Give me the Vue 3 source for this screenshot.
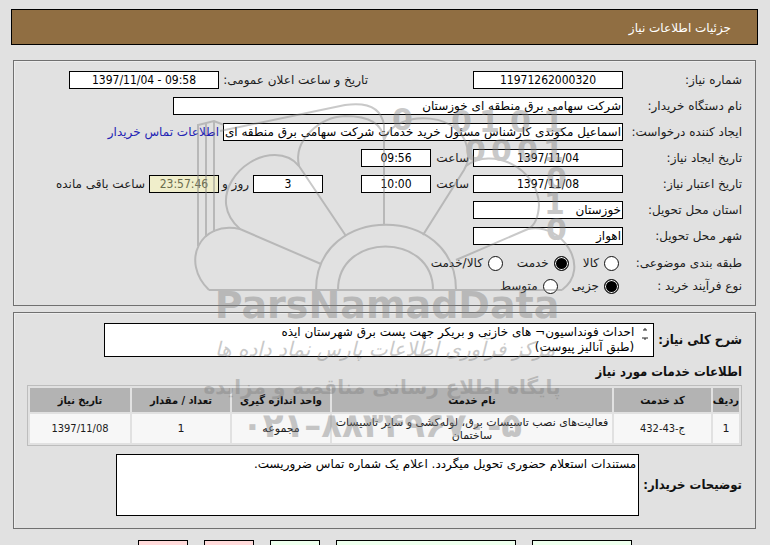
<script setup>
const summary = 'احداث فونداسیون¬ های خازنی و بریکر جهت پست برق شهرستان ایذه\n(طبق آنالیز پیوست)'
const notes = 'مستندات استعلام حضوری تحویل میگردد. اعلام یک شماره تماس ضروریست.'
const services = [
  {
    row: '1',
    code: 'ج-43-432',
    name: 'فعالیت‌های نصب تاسیسات برق، لوله‌کشی و سایر تاسیسات ساختمان',
    unit: 'مجموعه',
    amount: '1',
    date: '1397/11/08',
  },
]
const kinds = [
  { id: 'goods', label: 'کالا' },
  { id: 'service', label: 'خدمت' },
  { id: 'both', label: 'کالا/خدمت' },
]
const processes = [
  { id: 'small', label: 'جزیی' },
  { id: 'medium', label: 'متوسط' },
]
</script>

<template>
  <main class="page" dir="rtl">
    <header class="title">جزئیات اطلاعات نیاز</header>

    <section class="panel details">
      <div class="line">
        <label class="name" for="number">شماره نیاز:</label>
        <input id="number" class="box date" readonly value="11971262000320">
        <label class="announce" for="announced">تاریخ و ساعت اعلان عمومی:</label>
        <input id="announced" class="box date" dir="ltr" readonly value="1397/11/04 - 09:58">
      </div>
      <div class="line">
        <label class="name" for="buyer">نام دستگاه خریدار:</label>
        <input id="buyer" class="box buyer" readonly value="شرکت سهامی برق منطقه ای خوزستان">
      </div>
      <div class="line">
        <label class="name" for="creator">ایجاد کننده درخواست:</label>
        <input id="creator" class="box creator" readonly value="اسماعیل مکوندی کارشناس مسئول خرید خدمات شرکت سهامی برق منطقه ای خوزستان">
        <a class="contact" href="#">اطلاعات تماس خریدار</a>
      </div>
      <div class="line">
        <label class="name" for="created">تاریخ ایجاد نیاز:</label>
        <input id="created" class="box date" readonly value="1397/11/04">
        <label class="hour" for="createdHour">ساعت</label>
        <input id="createdHour" class="box time" readonly value="09:56">
      </div>
      <div class="line">
        <label class="name" for="expires">تاریخ اعتبار نیاز:</label>
        <input id="expires" class="box date" readonly value="1397/11/08">
        <label class="hour" for="expiresHour">ساعت</label>
        <input id="expiresHour" class="box time" readonly value="10:00">
        <input id="days" class="box time days" readonly value="3">
        <label class="unit" for="days">روز و</label>
        <input id="remaining" class="box time remaining" readonly value="23:57:46">
        <label class="left" for="remaining">ساعت باقی مانده</label>
      </div>
      <div class="line">
        <label class="name" for="province">استان محل تحویل:</label>
        <input id="province" class="box place" readonly value="خوزستان">
      </div>
      <div class="line">
        <label class="name" for="city">شهر محل تحویل:</label>
        <input id="city" class="box place" readonly value="اهواز">
      </div>
      <div class="line choice" role="radiogroup" aria-label="طبقه بندی موضوعی">
        <span class="name">طبقه بندی موضوعی:</span>
        <label v-for="k in kinds" :key="k.id" class="option">
          <input type="radio" name="kind" :checked="k.id === 'service'">{{ k.label }}
        </label>
      </div>
      <div class="line choice" role="radiogroup" aria-label="نوع فرآیند خرید">
        <span class="name">نوع فرآیند خرید :</span>
        <label v-for="p in processes" :key="p.id" class="option">
          <input type="radio" name="process" :checked="p.id === 'small'">{{ p.label }}
        </label>
      </div>
    </section>

    <section class="panel items">
      <div class="summary">
        <label class="strong" for="summary">شرح کلی نیاز:</label>
        <div class="summarybox">
          <svg class="spin" viewBox="0 0 12 20" aria-hidden="true">
            <path d="M4 6h4M5 5h2M3 14h6M5 15h2" />
          </svg>
          <textarea id="summary" readonly :value="summary"></textarea>
        </div>
      </div>
      <h2 class="strong">اطلاعات خدمات مورد نیاز</h2>
      <table>
        <colgroup>
          <col class="c1"><col class="c2"><col><col class="c3"><col class="c3"><col class="c4">
        </colgroup>
        <thead>
          <tr>
            <th>ردیف</th><th>کد خدمت</th><th>نام خدمت</th><th>واحد اندازه گیری</th><th>تعداد / مقدار</th><th>تاریخ نیاز</th>
          </tr>
        </thead>
        <tbody>
          <tr v-for="s in services" :key="s.row">
            <td>{{ s.row }}</td><td class="num">{{ s.code }}</td><td>{{ s.name }}</td><td>{{ s.unit }}</td><td>{{ s.amount }}</td><td class="num">{{ s.date }}</td>
          </tr>
        </tbody>
      </table>
      <div class="notes">
        <label class="strong" for="notes">توضیحات خریدار:</label>
        <textarea id="notes" class="notesbox" readonly :value="notes"></textarea>
      </div>
    </section>

    <footer class="actions">
      <button class="green medium" type="button" aria-label="پاسخ به نیاز"></button>
      <button class="green wide" type="button" aria-label="مشاهده مدارک پیوستی"></button>
      <button class="green" type="button" aria-label="چاپ"></button>
      <button class="pink" type="button">بازگشت</button>
      <button class="pink" type="button" aria-label="خروج"></button>
    </footer>

    <svg class="mark" viewBox="185 95 400 360" aria-hidden="true">
      <g class="lines">
        <path d="M209 290H562" />
        <path d="M316 290C316 203 456 203 456 290" />
        <path d="M338 290C338 232 433 232 433 290" />
        <path d="M209 290C180 262 200 220 240 229L321 264" />
        <path d="M240 229C206 200 240 155 275 155Q290 155 299 166L346 236" />
        <path d="M299 166C293 140 320 117 345 116Q382 116 384 140V225" />
        <path d="M384 140C395 108 468 110 468 155Q469 161 464 170L423 235" />
        <path d="M466 166C492 146 538 168 539 205Q538 224 528 229L456 260" />
        <path d="M528 229C562 222 592 268 562 290" />
        <path d="M198 246V125L214 121L224 125M206 237V123M214 232V121" />
        <path d="M220 131L345 105Q380 100 384 125V140" />
      </g>
      <g class="digits">
        <text x="392" y="130">0</text><text x="451" y="132">0</text>
        <text x="479" y="132">1</text><text x="510" y="132">0</text><text x="543" y="132">1</text>
        <text x="465" y="161">0</text><text x="491" y="161">0</text><text x="517" y="161">0</text><text x="543" y="161">1</text>
        <text x="546" y="189">0</text><text x="544" y="214">1</text><text x="546" y="240">0</text>
      </g>
      <text class="brand" x="387" y="318">ParsNamadData</text>
      <text class="script" x="385" y="356">مرکز فرآوری اطلاعات پارس نماد داده ها</text>
      <text class="tag" x="382" y="394">پایگاه اطلاع رسانی مناقصه و مزایده</text>
      <text class="phone" x="382" y="437">۰۲۱–۸۸۳۴۹۶۷۰-۵</text>
    </svg>
  </main>
</template>

<style>
body {
  background: #e1e1e1;
  overflow: hidden;
  height: 100vh;
}
</style>

<style scoped>
.page {
  position: relative;
  padding: 9px 12px 0 11px;
  font-family: "DejaVu Sans", sans-serif;
  font-size: 12px;
  line-height: 16px;
  color: #1c1c1c;
}
.page * { box-sizing: border-box; }
input, textarea, button { font: inherit; color: #000; }
.title {
  height: 36px;
  padding: 10px 26px;
  border: 1px solid #000;
  background: #906e42;
  color: #fff;
}
.panel {
  margin: 15px 2px 0;
  border: 1px solid #707070;
  box-shadow: inset 1px 1px #ededed;
}
.details { padding: 10px 13px 4px; }
.items { margin-top: 6px; padding: 10px 13px 12px; }
.line {
  display: flex;
  align-items: center;
  height: 18px;
  margin-bottom: 8px;
  white-space: nowrap;
}
.name { width: 119px; flex: none; }
.box {
  height: 18px;
  border: 1px solid #000;
  border-radius: 0;
  background: #fff;
  padding: 0 1px;
  margin: 0;
  outline: none;
}
.date { width: 150px; text-align: center; font-family: "DejaVu Sans Condensed", sans-serif; }
.place { width: 150px; }
.time { width: 70px; text-align: center; font-family: "DejaVu Sans Condensed", sans-serif; }
.buyer { width: 450px; }
.creator { width: 400px; }
.announce { width: 149px; margin-right: 105px; }
.contact { margin-right: 4px; color: #2323b4; text-decoration: none; }
.hour { width: 42px; padding-right: 4px; }
.days { margin-right: 38px; }
.unit { width: 34px; padding-right: 4px; }
.remaining { background: #f0eecb; color: #6b6b4c; }
.left { margin-right: 4px; }
.choice { height: 16px; margin: 10px 0 7px; }
.choice + .choice { margin-top: 0; }
.option {
  display: flex;
  align-items: center;
  gap: 5px;
  margin: 0 4px 0 10px;
}
.option input {
  appearance: none;
  width: 15px;
  height: 15px;
  margin: 0;
  border: 1px solid #111;
  border-radius: 50%;
  background: #fff;
}
.option input:checked {
  background: #000;
  box-shadow: inset 0 0 0 1px #fff;
}
.strong {
  margin: 0;
  font-family: "DejaVu Sans Condensed", sans-serif;
  font-size: 13px;
  font-weight: bold;
  color: #111;
}
.summary, .notes { display: flex; align-items: center; gap: 4px; }
.summarybox {
  display: flex;
  width: 550px;
  height: 34px;
  border: 1px solid #000;
  background: #fff;
}
.spin { width: 12px; height: 20px; margin: 0 2px 0 5px; stroke: #222; fill: none; }
textarea {
  flex: 1;
  height: 32px;
  margin: 0;
  padding: 1px 0;
  border: 0;
  resize: none;
  outline: none;
  overflow: hidden;
  line-height: 15px;
  background: transparent;
}
h2.strong { margin: 7px 0 5px; }
table {
  width: 100%;
  table-layout: fixed;
  border: 1px solid #bdbdbd;
  border-spacing: 2px;
  font-size: 11px;
  line-height: 13px;
  text-align: center;
}
.c1 { width: 26px; }
.c2 { width: 97px; }
.c3 { width: 98px; }
.c4 { width: 100px; }
th {
  height: 24px;
  padding: 0;
  background: #b3b3b3;
  color: #111;
  font-family: "DejaVu Sans Condensed", sans-serif;
  white-space: nowrap;
}
td { height: 29px; padding: 0; background: #f7f7f7; }
.num { font-family: "DejaVu Sans Condensed", sans-serif; }
.notes { margin-top: 8px; }
.notes .notesbox {
  flex: none;
  width: 523px;
  height: 62px;
  padding: 2px;
  border: 1px solid #000;
  background: #fff;
}
.actions {
  display: flex;
  justify-content: center;
  gap: 16px;
  margin-top: 11px;
}
.actions button {
  width: 50px;
  height: 26px;
  padding: 0;
  border: 1px solid #000;
}
.actions .medium { width: 100px; }
.actions .wide { width: 180px; }
.actions .green { background: #edffed; }
.actions .pink { background: #ffdada; }
.mark {
  position: absolute;
  top: 95px;
  left: 50%;
  width: 400px;
  height: 360px;
  margin-left: -200px;
  opacity: 0.42;
  pointer-events: none;
  fill: #808080;
}
.lines { fill: none; stroke: #808080; stroke-width: 2; }
.mark text { text-anchor: middle; }
.mark .digits text { font: bold 30px "DejaVu Sans", sans-serif; text-anchor: start; direction: ltr; }
.mark .brand { font: bold 38px "DejaVu Sans", sans-serif; direction: ltr; }
.mark .script { font: italic 20px "DejaVu Sans", sans-serif; }
.mark .tag { font: bold 20px "DejaVu Sans", sans-serif; }
.mark .phone { font: bold 34px "DejaVu Sans", sans-serif; direction: ltr; unicode-bidi: bidi-override; }
</style>
